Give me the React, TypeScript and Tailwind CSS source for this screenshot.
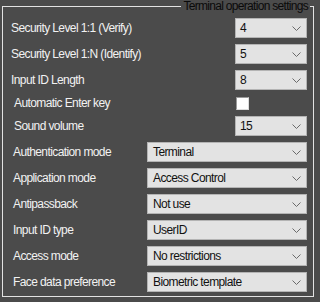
import React from "react";

function Chevron() {
  return (
    <svg width="9" height="5" viewBox="0 0 9 5" className="shrink-0">
      <path d="M0.5 0.5 L4.5 4.5 L8.5 0.5" fill="none" stroke="#6a6a6a" strokeWidth="1" />
    </svg>
  );
}

function ShortCombo({ value }: { value: string }) {
  return (
    <div className="shrink-0 w-[72px] h-[20px] flex items-center justify-between pl-[4px] pr-[5px] bg-[#e3e3e3] border border-[#b4b4b4] text-[#111111]">
      <span>{value}</span>
      <Chevron />
    </div>
  );
}

function WideCombo({ value }: { value: string }) {
  return (
    <div className="shrink-0 w-[160px] h-[20px] flex items-center justify-between pl-[5px] pr-[5px] bg-[#e3e3e3] border border-[#b4b4b4] text-[#111111]">
      <span>{value}</span>
      <Chevron />
    </div>
  );
}

const topRows = [
  { label: "Security Level 1:1 (Verify)", value: "4" },
  { label: "Security Level 1:N (Identify)", value: "5" },
  { label: "Input ID Length", value: "8" },
];

const bottomRows = [
  { label: "Authentication mode", value: "Terminal" },
  { label: "Application mode", value: "Access Control" },
  { label: "Antipassback", value: "Not use" },
  { label: "Input ID type", value: "UserID" },
  { label: "Access mode", value: "No restrictions" },
  { label: "Face data preference", value: "Biometric template" },
];

export default function App() {
  return (
    <div className="w-[320px] h-[302px] bg-[#4b4b4b] text-[#f2f2f2] text-[12px] leading-[14px] tracking-[-0.6px] font-['Liberation_Sans',Arial,sans-serif]">
      <fieldset className="ml-[2px] w-[312px] h-[297px] border border-[#e2e2e2] pr-[6px] pt-[3px]">
        <legend className="ml-auto mr-[-3px] px-[2px] text-[#0a0a0a] leading-[12px] tracking-[-0.7px]">
          Terminal operation settings
        </legend>
        {topRows.map((r) => (
          <div key={r.label} className="h-[26px] flex items-center justify-between pl-[8px]">
            <span>{r.label}</span>
            <ShortCombo value={r.value} />
          </div>
        ))}
        <div className="h-[20px] flex items-center justify-between pl-[11px]">
          <span>Automatic Enter key</span>
          <div className="shrink-0 w-[72px] flex">
            <div className="ml-[1px] w-[13px] h-[13px] bg-white border border-[#9a9a9a] border-r-[#dcdcdc] border-b-[#dcdcdc]" />
          </div>
        </div>
        <div className="h-[26px] flex items-center justify-between pl-[11px]">
          <span>Sound volume</span>
          <ShortCombo value="15" />
        </div>
        {bottomRows.map((r) => (
          <div key={r.label} className="h-[26px] flex items-center justify-between pl-[10px]">
            <span>{r.label}</span>
            <WideCombo value={r.value} />
          </div>
        ))}
      </fieldset>
    </div>
  );
}
